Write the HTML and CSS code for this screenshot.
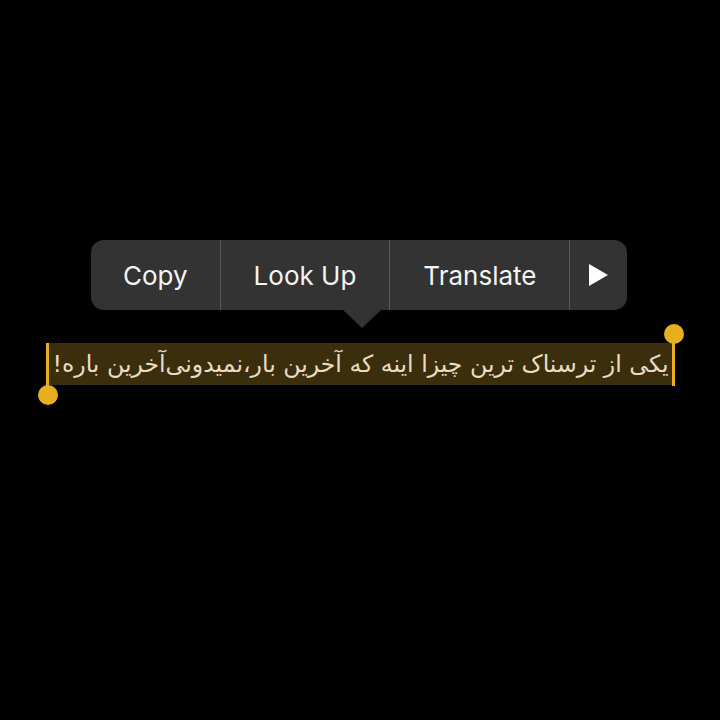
FILE: index.html
```html
<!DOCTYPE html>
<html lang="fa">
<head>
<meta charset="utf-8">
<link rel="stylesheet" href="styles.css">
</head>
<body>
<div class="screen">
  <div class="menu">
    <div class="item first">Copy</div>
    <div class="sep"></div>
    <div class="item">Look Up</div>
    <div class="sep"></div>
    <div class="item">Translate</div>
    <div class="sep"></div>
    <div class="item more"><svg width="19" height="22" viewBox="0 0 19 22"><path d="M0 0 L19 11 L0 22 Z" fill="#ffffff"/></svg></div>
    <div class="pointer"></div>
  </div>
  <div class="line">
    <span class="sel" dir="rtl">یکی از ترسناک ترین چیزا اینه که آخرین بار،نمیدونی‌آخرین باره!</span>
    <span class="handle start"></span>
    <span class="handle end"></span>
  </div>
</div>
</body>
</html>
```
FILE: styles.css
```css
html, body {
  margin: 0;
  padding: 0;
  background: #000000;
}
.screen {
  width: 720px;
  height: 720px;
  background: #000000;
  display: flex;
  flex-direction: column;
  padding-top: 240px;
  box-sizing: border-box;
}
.menu {
  position: relative;
  margin-left: 91px;
  width: 536px;
  height: 70px;
  background: #333333;
  border-radius: 13px;
  display: flex;
  align-items: stretch;
  font-family: Inter, "Noto Sans", sans-serif;
  font-size: 26px;
  color: #f4f4f4;
}
.item {
  display: flex;
  align-items: center;
  justify-content: center;
  padding: 0 33px;
}
.item.first {
  padding: 0 32px;
}
.item.more {
  flex: 1;
  padding: 0;
}
.sep {
  width: 1px;
  background: #5a5a5a;
}
.pointer {
  position: absolute;
  left: 252px;
  top: 70px;
  width: 0;
  height: 0;
  border-left: 19px solid transparent;
  border-right: 19px solid transparent;
  border-top: 18px solid #333333;
}
.line {
  position: relative;
  margin-top: 33px;
  margin-left: 49px;
  width: 623px;
  height: 42px;
  display: flex;
}
.sel {
  flex: 1;
  background: #3a2e0c;
  color: #e9dcc0;
  font-family: "DejaVu Sans", "Noto Sans", sans-serif;
  font-size: 23.6px;
  line-height: 42px;
  text-align: center;
  white-space: nowrap;
}
.handle {
  position: absolute;
  width: 3px;
  background: #e7af22;
}
.handle::after {
  content: "";
  position: absolute;
  width: 20px;
  height: 20px;
  border-radius: 50%;
  background: #e7af22;
  left: -8.5px;
}
.handle.start {
  left: -3px;
  top: 0;
  height: 52px;
}
.handle.start::after {
  bottom: -10px;
}
.handle.end {
  left: 623px;
  top: -9px;
  height: 52px;
}
.handle.end::after {
  top: -10px;
}
```
